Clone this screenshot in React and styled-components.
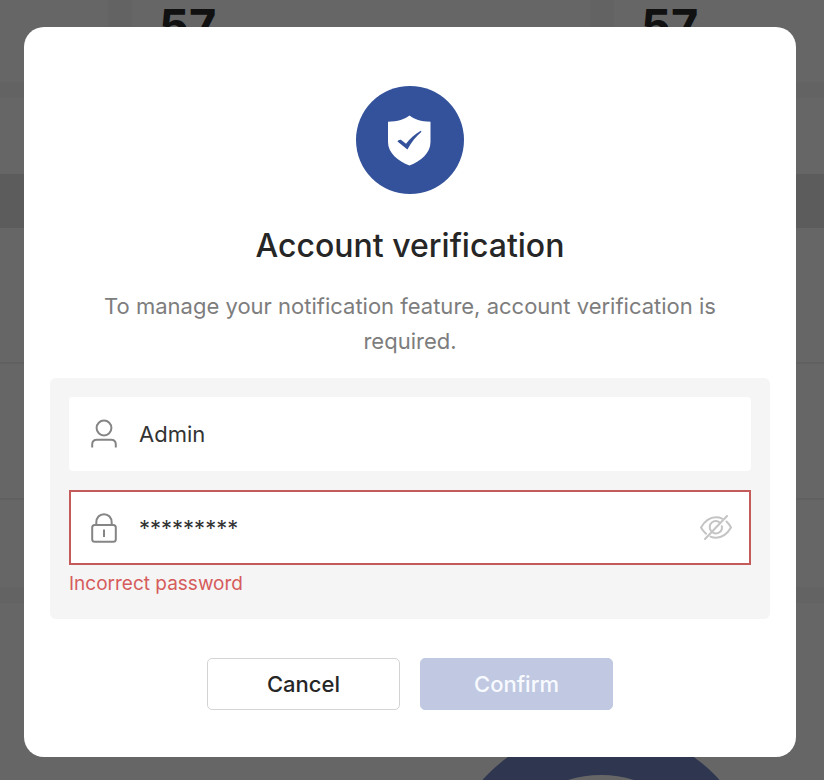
import React, { useState } from "react";
import styled, { createGlobalStyle, css } from "styled-components";

const GlobalStyle = createGlobalStyle`
  *, *::before, *::after { box-sizing: border-box; }
  body {
    margin: 0;
    background: #ffffff;
    font-family: Inter, "Noto Sans", sans-serif;
    color: #262626;
  }
  button, input { font: inherit; }
`;

const Screen = styled.div`
  position: relative;
  min-height: 100vh;
  overflow: hidden;
`;

const Dashboard = styled.div`
  position: absolute;
  inset: 0;
  overflow: hidden;
`;

const StatRow = styled.div`
  display: grid;
  grid-template-columns: 108px 1fr 210px;
  column-gap: 24px;
  height: 82px;
  background: #f7f7f7;
`;

const Stat = styled.div`
  padding-left: 27px;
  background: #ffffff;
  font-size: 47px;
  line-height: 52px;
  font-weight: 700;
  color: #2b2b2b;
`;

const Strip = styled.div`
  height: 16px;
  background: #f7f7f7;
`;

const TableTitle = styled.div`
  height: 76px;
`;

const TableHead = styled.div`
  height: 54px;
  background: #e6e6e6;
`;

const TableLine = styled.div`
  height: ${(p) => p.$height}px;
  border-bottom: ${(p) => (p.$last ? "0" : "2px solid #f0f0f0")};
`;

const ChartPanel = styled.div`
  display: flex;
  justify-content: center;
  padding: 124px 0 0 378px;
`;

const Donut = styled.svg`
  flex: none;
  width: 318px;
  height: 318px;
`;

const Overlay = styled.div`
  position: relative;
  min-height: 100vh;
  padding: 27px 28px 23px 24px;
  background: rgba(0, 0, 0, 0.6);
`;

const Dialog = styled.section`
  display: flex;
  flex-direction: column;
  align-items: center;
  padding: 59px 26px 47px;
  border-radius: 20px;
  background: #ffffff;
`;

const Emblem = styled.svg`
  width: 108px;
  height: 108px;
`;

const Title = styled.h1`
  margin: 32px 0 0;
  font-size: 32px;
  line-height: 40px;
  font-weight: 500;
  color: #262626;
`;

const Description = styled.p`
  max-width: 660px;
  margin: 23px 0 0;
  font-size: 22px;
  line-height: 35px;
  text-align: center;
  color: #7d7d7d;
`;

const Form = styled.form`
  display: flex;
  flex-direction: column;
  align-items: center;
  width: 100%;
  margin-top: 19px;
`;

const Fields = styled.div`
  width: 100%;
  padding: 19px 19px 21px;
  border-radius: 6px;
  background: #f5f5f5;
`;

const Field = styled.label`
  display: flex;
  align-items: center;
  height: 74px;
  padding: 0 21px;
  border: 1px solid transparent;
  border-radius: 4px;
  background: #ffffff;

  & + & {
    margin-top: 19px;
  }

  ${(p) =>
    p.$invalid &&
    css`
      border: 2px solid #c55a5a;
      border-radius: 0;
      height: 75px;
      padding: 0 17px 0 20px;
    `}
`;

const FieldIcon = styled.svg`
  flex: none;
  width: 26px;
  height: 30px;
  margin-right: 22px;
  fill: none;
  stroke: #858585;
  stroke-width: 2;
`;

const TextInput = styled.input`
  flex: 1;
  min-width: 0;
  padding: 0;
  border: 0;
  outline: 0;
  background: transparent;
  font-size: 22px;
  line-height: 30px;
  color: #333333;
`;

const EyeButton = styled.button`
  flex: none;
  display: flex;
  padding: 0;
  border: 0;
  background: transparent;
  cursor: pointer;
`;

const EyeIcon = styled.svg`
  width: 32px;
  height: 26px;
  fill: none;
  stroke: #c4c4c4;
  stroke-width: 2;
  stroke-linecap: round;
`;

const ErrorText = styled.p`
  margin: 5px 0 0;
  font-size: 19px;
  line-height: 28px;
  color: #d65c5c;
`;

const Actions = styled.div`
  display: flex;
  gap: 20px;
  margin-top: 39px;
`;

const ActionButton = styled.button`
  width: 193px;
  height: 52px;
  padding: 0;
  border: 1px solid #d4d4d4;
  border-radius: 5px;
  background: #ffffff;
  font-size: 22px;
  font-weight: 500;
  color: #262626;

  ${(p) =>
    p.$primary &&
    css`
      border-color: #c0c9e1;
      background: #c0c9e1;
      color: #f8faff;
    `}
`;

function Background() {
  return (
    <Dashboard aria-hidden="true">
      <StatRow>
        <Stat />
        <Stat>57</Stat>
        <Stat>57</Stat>
      </StatRow>
      <Strip />
      <TableTitle />
      <TableHead />
      <TableLine $height={136} />
      <TableLine $height={136} />
      <TableLine $height={87} $last />
      <Strip />
      <ChartPanel>
        <Donut viewBox="0 0 318 318">
          <circle cx="159" cy="159" r="135" fill="none" stroke="#7587c8" strokeWidth="48" />
        </Donut>
      </ChartPanel>
    </Dashboard>
  );
}

export default function App() {
  const [user, setUser] = useState("Admin");
  const [password, setPassword] = useState("*********");

  return (
    <Screen>
      <GlobalStyle />
      <Background />
      <Overlay>
        <Dialog role="dialog" aria-modal="true" aria-labelledby="dialog-title">
          <Emblem viewBox="0 0 108 108" aria-hidden="true">
            <circle cx="54" cy="54" r="54" fill="#33529b" />
            <path
              d="M53.5 29.5C58 33.4 65 35.4 74.5 35.8V56C74.5 67 65 75 53.5 79.5C42 75 32 67 32 56V35.8C41.5 35.4 49 33.4 53.5 29.5Z"
              fill="#ffffff"
            />
            <path
              d="M41.5 55.5C42.3 54 44 53.2 45.5 54.2L50 57.7C54 52.5 59 48 64.8 44.8L65.5 45.8C60 50.5 55.5 56.2 51.4 63.4Z"
              fill="#33529b"
            />
          </Emblem>
          <Title id="dialog-title">Account verification</Title>
          <Description>
            To manage your notification feature, account verification is required.
          </Description>
          <Form onSubmit={(e) => e.preventDefault()}>
            <Fields>
              <Field>
                <FieldIcon viewBox="0 0 26 30" aria-hidden="true">
                  <circle cx="13" cy="9" r="7.4" />
                  <path d="M1.2 28.5V25.5Q1.2 20.8 6 20.8H20Q24.8 20.8 24.8 25.5V28.5" />
                </FieldIcon>
                <TextInput
                  aria-label="Username"
                  value={user}
                  onChange={(e) => setUser(e.target.value)}
                />
              </Field>
              <Field $invalid>
                <FieldIcon viewBox="0 0 26 30" aria-hidden="true">
                  <rect x="1.2" y="12" width="23.6" height="16.8" rx="2.5" />
                  <path d="M5.3 12V9.5C5.3 4.5 8.5 1.2 13 1.2S20.7 4.5 20.7 9.5V12M13 16.5V24" />
                </FieldIcon>
                <TextInput
                  aria-label="Password"
                  aria-invalid="true"
                  aria-describedby="password-error"
                  value={password}
                  onChange={(e) => setPassword(e.target.value)}
                />
                <EyeButton type="button" aria-label="Show password">
                  <EyeIcon viewBox="0 0 32 26" aria-hidden="true">
                    <path d="M22 3.6C20.2 2.7 18.2 2.3 16 2.3C9.5 2.3 4.5 6.5 1 12.5C2.3 14.9 4 17 6 18.8M10.5 21.6C12.2 22.3 14 22.7 16 22.7C22.5 22.7 27.5 18.5 31 12.5C29.8 10.1 28.3 8.2 26.5 6.5" />
                    <path d="M20.2 8.1A6 6 0 0 0 11 15.8M13 17.7A6 6 0 0 0 21.8 11.2" />
                    <path d="M27 1L5 24M17.6 10.8L13.8 14.8" />
                  </EyeIcon>
                </EyeButton>
              </Field>
              <ErrorText id="password-error">Incorrect password</ErrorText>
            </Fields>
            <Actions>
              <ActionButton type="button">Cancel</ActionButton>
              <ActionButton type="submit" disabled $primary>
                Confirm
              </ActionButton>
            </Actions>
          </Form>
        </Dialog>
      </Overlay>
    </Screen>
  );
}
